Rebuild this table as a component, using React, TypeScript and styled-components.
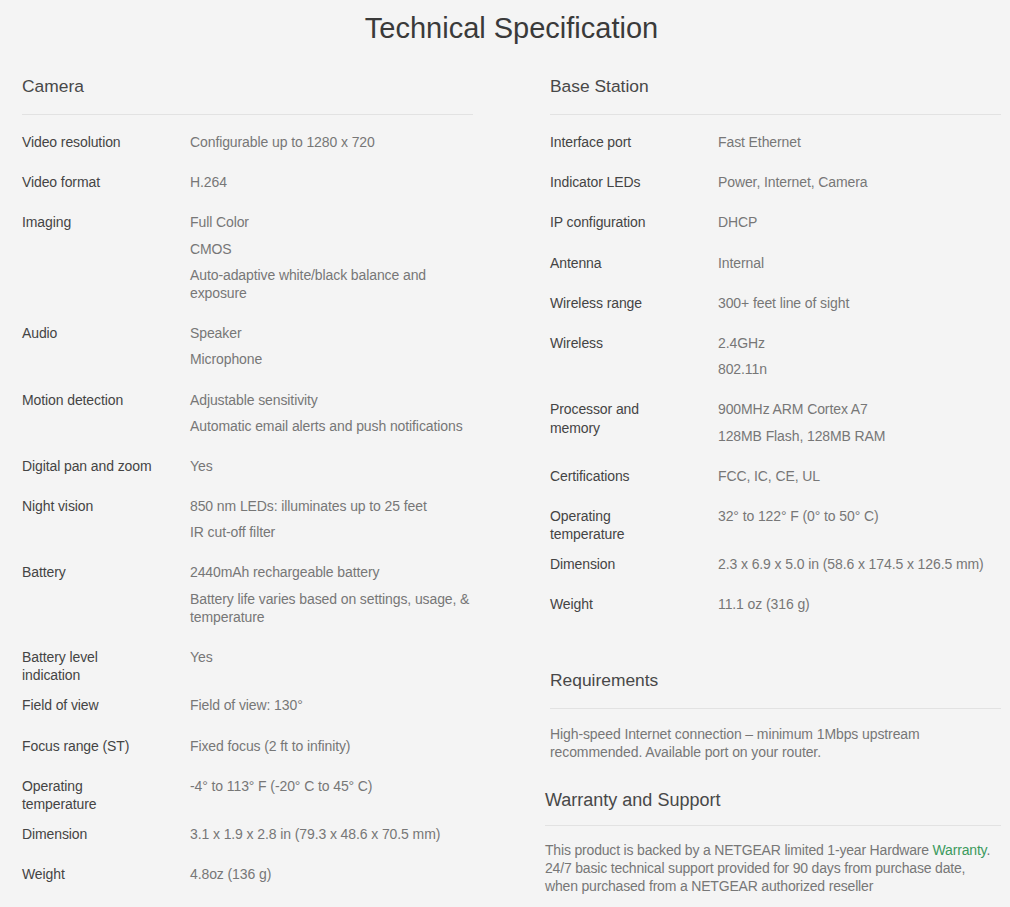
import React from "react";
import styled, { createGlobalStyle } from "styled-components";

const Global = createGlobalStyle`
  html, body { margin: 0; padding: 0; background: #f4f4f4; }
  body { font-family: "Liberation Sans", Arial, sans-serif; }
  * { box-sizing: border-box; }
`;

const Page = styled.div`
  width: 1010px;
  min-height: 907px;
  background: #f4f4f4;
  padding: 11px 9px 0 22px;
`;

const Title = styled.h1`
  margin: 0;
  text-align: center;
  font-size: 29px;
  line-height: 34px;
  font-weight: 400;
  color: #3a3a3a;
`;

const Columns = styled.div`
  display: grid;
  grid-template-columns: 451px 451px;
  column-gap: 77px;
  margin-top: 29px;
`;

const Column = styled.div`
  display: flex;
  flex-direction: column;
`;

const SectionHead = styled.h2<{ $shift?: number; $pad?: number; $top?: number; $size?: number }>`
  margin: ${(p) => p.$top ?? 0}px 0 0 ${(p) => p.$shift ?? 0}px;
  font-size: ${(p) => p.$size ?? 17.4}px;
  line-height: 24px;
  font-weight: 400;
  color: #484848;
  padding-bottom: ${(p) => p.$pad ?? 16}px;
  border-bottom: 1px solid #e2e2e2;
`;

const SpecList = styled.dl`
  margin: 18px 0 0;
`;

const Row = styled.div`
  display: grid;
  grid-template-columns: 134px 1fr;
  column-gap: 34px;
  padding-bottom: 12px;
  font-size: 14px;
  line-height: 1.3;
  letter-spacing: -0.1px;
`;

const Label = styled.dt`
  margin: 0;
  color: #444;
`;

const Values = styled.dd`
  margin: 0 0 10px;
  display: flex;
  flex-direction: column;
  gap: 8px;
  color: #777;
`;

const Paragraph = styled.p<{ $shift?: number; $top?: number; $tight?: boolean }>`
  margin: ${(p) => p.$top ?? 16}px ${(p) => (p.$tight ? 2 : 0)}px 0 ${(p) => p.$shift ?? 0}px;
  font-size: 14px;
  line-height: 1.3;
  letter-spacing: ${(p) => (p.$tight ? -0.18 : -0.1)}px;
  color: #777;
`;

const Link = styled.a`
  color: #3b9a5d;
  text-decoration: none;
`;

type Spec = [string, string[]];

const camera: Spec[] = [
  ["Video resolution", ["Configurable up to 1280 x 720"]],
  ["Video format", ["H.264"]],
  ["Imaging", ["Full Color", "CMOS", "Auto-adaptive white/black balance and exposure"]],
  ["Audio", ["Speaker", "Microphone"]],
  ["Motion detection", ["Adjustable sensitivity", "Automatic email alerts and push notifications"]],
  ["Digital pan and zoom", ["Yes"]],
  ["Night vision", ["850 nm LEDs: illuminates up to 25 feet", "IR cut-off filter"]],
  ["Battery", ["2440mAh rechargeable battery", "Battery life varies based on settings, usage, & temperature"]],
  ["Battery level indication", ["Yes"]],
  ["Field of view", ["Field of view: 130°"]],
  ["Focus range (ST)", ["Fixed focus (2 ft to infinity)"]],
  ["Operating temperature", ["-4° to 113° F (-20° C to 45° C)"]],
  ["Dimension", ["3.1 x 1.9 x 2.8 in (79.3 x 48.6 x 70.5 mm)"]],
  ["Weight", ["4.8oz (136 g)"]],
];

const base: Spec[] = [
  ["Interface port", ["Fast Ethernet"]],
  ["Indicator LEDs", ["Power, Internet, Camera"]],
  ["IP configuration", ["DHCP"]],
  ["Antenna", ["Internal"]],
  ["Wireless range", ["300+ feet line of sight"]],
  ["Wireless", ["2.4GHz", "802.11n"]],
  ["Processor and memory", ["900MHz ARM Cortex A7", "128MB Flash, 128MB RAM"]],
  ["Certifications", ["FCC, IC, CE, UL"]],
  ["Operating temperature", ["32° to 122° F (0° to 50° C)"]],
  ["Dimension", ["2.3 x 6.9 x 5.0 in (58.6 x 174.5 x 126.5 mm)"]],
  ["Weight", ["11.1 oz (316 g)"]],
];

const SpecTable = ({ specs }: { specs: Spec[] }) => (
  <SpecList>
    {specs.map(([label, values]) => (
      <Row key={label}>
        <Label>{label}</Label>
        <Values>
          {values.map((v) => (
            <span key={v}>{v}</span>
          ))}
        </Values>
      </Row>
    ))}
  </SpecList>
);

export default function App() {
  return (
    <Page>
      <Global />
      <Title>Technical Specification</Title>
      <Columns>
        <Column>
          <SectionHead>Camera</SectionHead>
          <SpecTable specs={camera} />
        </Column>
        <Column>
          <SectionHead>Base Station</SectionHead>
          <SpecTable specs={base} />
          <SectionHead $top={32}>Requirements</SectionHead>
          <Paragraph>
            High-speed Internet connection – minimum 1Mbps upstream recommended. Available port on your router.
          </Paragraph>
          <SectionHead $top={27} $shift={-5} $pad={13} $size={18}>
            Warranty and Support
          </SectionHead>
          <Paragraph $shift={-5} $top={15} $tight>
            This product is backed by a NETGEAR limited 1-year Hardware <Link href="#">Warranty</Link>. 24/7 basic
            technical support provided for 90 days from purchase date, when purchased from a NETGEAR authorized
            reseller
          </Paragraph>
        </Column>
      </Columns>
    </Page>
  );
}
